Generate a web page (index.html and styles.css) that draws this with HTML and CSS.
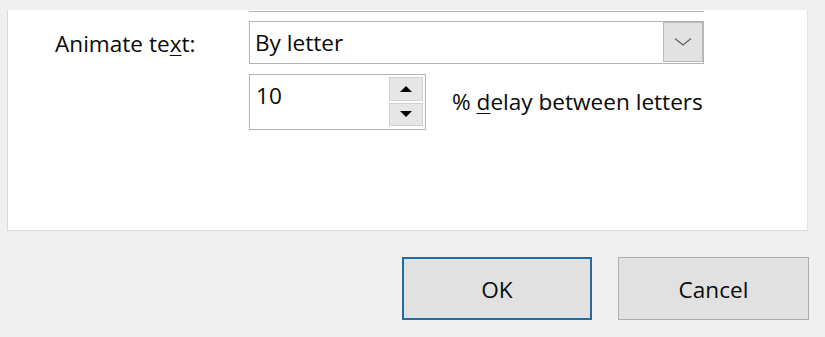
FILE: index.html
```html
<!DOCTYPE html>
<html>
<head>
<meta charset="utf-8">
<link rel="stylesheet" href="styles.css">
</head>
<body>
<div class="panel">
  <div class="stub"></div>
  <div class="row row-combo">
    <div class="label">Animate te<u>x</u>t:</div>
    <div class="combo">
      <div class="combo-value">By letter</div>
      <div class="combo-btn">
        <svg width="18" height="8" viewBox="0 0 18 8"><path d="M1 0.5 L9 7 L17 0.5" fill="none" stroke="#606060" stroke-width="1.2"/></svg>
      </div>
    </div>
  </div>
  <div class="row row-spin">
    <div class="spin">
      <div class="spin-value">10</div>
      <div class="spin-btns">
        <div class="spin-btn"><span class="tri-up"></span></div>
        <div class="spin-btn"><span class="tri-down"></span></div>
      </div>
    </div>
    <div class="spin-label">% <u>d</u>elay between letters</div>
  </div>
</div>
<div class="footer">
  <button class="btn btn-default">OK</button>
  <button class="btn">Cancel</button>
</div>
</body>
</html>
```
FILE: styles.css
```css
html, body {
  margin: 0;
  padding: 0;
}
body {
  background: #f0f0f0;
  width: 825px;
  height: 337px;
  overflow: hidden;
  font-family: "Open Sans", "Noto Sans", sans-serif;
  font-size: 22.6px;
  color: #0a0a0a;
}
u {
  text-decoration-thickness: 1px;
  text-underline-offset: 3px;
}
.panel {
  margin: 10px 17px 0 7px;
  height: 220px;
  background: #fff;
  border-left: 1px solid #d9d9d9;
  border-right: 1px solid #e4e4e4;
  border-bottom: 1px solid #d9d9d9;
  box-sizing: content-box;
}
.stub {
  margin-left: 241px;
  width: 455px;
  height: 1px;
  border-bottom: 1px solid #b4b4b4;
}
.row {
  display: flex;
  align-items: center;
}
.row-combo {
  margin-top: 9px;
}
.label {
  width: 194px;
  padding-left: 47px;
  padding-top: 2px;
  line-height: 28px;
}
.combo {
  width: 455px;
  height: 43px;
  box-sizing: border-box;
  border: 1px solid #b4b4b4;
  display: flex;
  align-items: stretch;
  padding: 0 0 1px 0;
}
.combo-value {
  flex: 1;
  padding-left: 5px;
  display: flex;
  align-items: center;
  padding-top: 1px;
}
.combo-btn {
  width: 40px;
  box-sizing: border-box;
  background: #e2e2e2;
  border: 1px solid #b9b9b9;
  display: flex;
  align-items: center;
  justify-content: center;
}
.row-spin {
  margin-top: 10px;
  padding-left: 241px;
  align-items: flex-start;
}
.spin {
  width: 177px;
  height: 56px;
  box-sizing: border-box;
  border: 1px solid #b4b4b4;
  display: flex;
}
.spin-value {
  flex: 1;
  padding-left: 6px;
  padding-top: 7px;
  line-height: 28px;
}
.spin-btns {
  width: 34px;
  margin: 2px 2px 3px 0;
  display: flex;
  flex-direction: column;
  gap: 2px;
}
.spin-btn {
  flex: 1;
  background: #e6e6e6;
  border: 1px solid #cfcfcf;
  display: flex;
  align-items: center;
  justify-content: center;
}
.tri-up {
  width: 0;
  height: 0;
  border-left: 6px solid transparent;
  border-right: 6px solid transparent;
  border-bottom: 6px solid #000;
}
.tri-down {
  width: 0;
  height: 0;
  border-left: 6px solid transparent;
  border-right: 6px solid transparent;
  border-top: 6px solid #000;
}
.spin-label {
  margin-left: 26px;
  margin-top: 14px;
  line-height: 28px;
}
.footer {
  display: flex;
  justify-content: flex-end;
  gap: 26px;
  padding-right: 16px;
  margin-top: 26px;
}
.btn {
  width: 191px;
  height: 63px;
  font-family: inherit;
  font-size: 22.6px;
  color: #0a0a0a;
  background: #e1e1e1;
  border: 1px solid #adadad;
  margin: 0;
  padding: 2px 0 0 0;
}
.btn-default {
  width: 190px;
  border: 2px solid #2a6a9a;
  box-shadow: inset 0 0 0 1px #cfe8f7;
}
```
